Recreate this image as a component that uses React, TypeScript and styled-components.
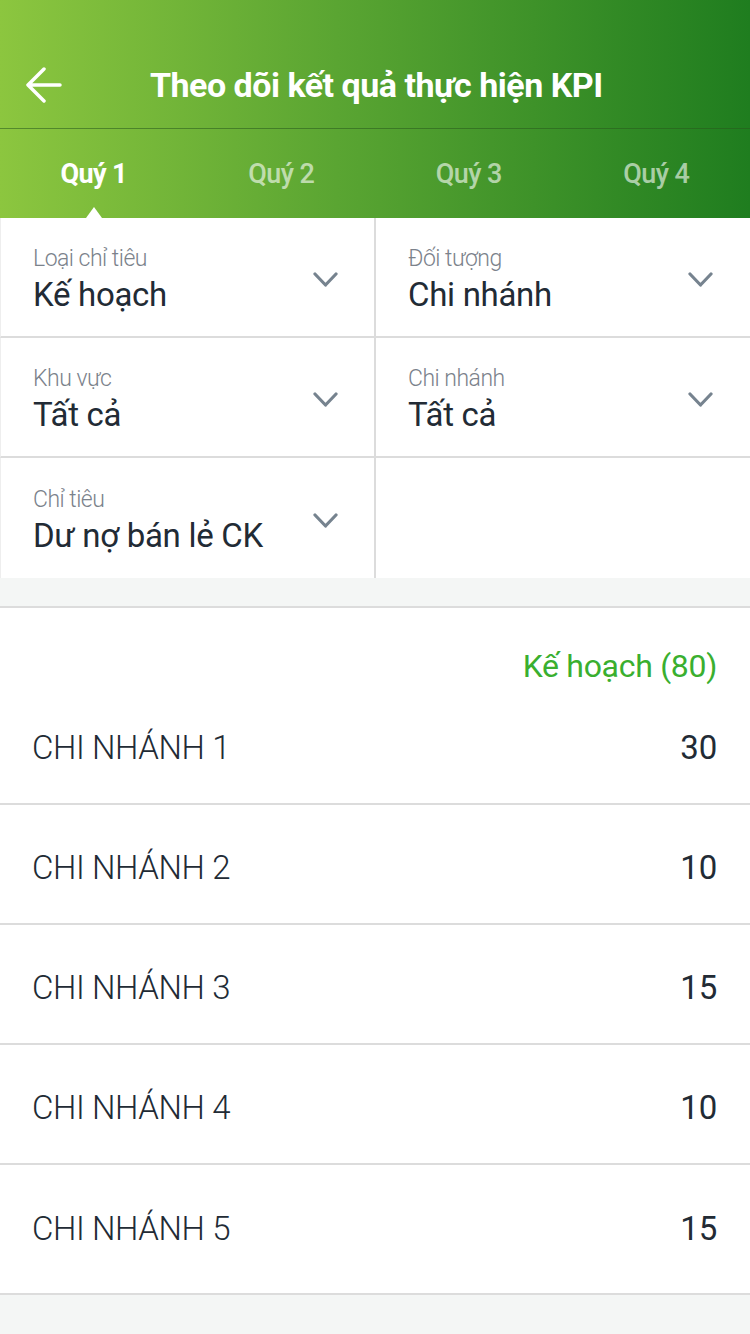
import React from "react";
import styled, { createGlobalStyle } from "styled-components";

const Global = createGlobalStyle`
  html, body { margin: 0; padding: 0; background: #f4f6f5; }
  body { font-family: "Roboto", "Liberation Sans", sans-serif; -webkit-font-smoothing: antialiased; }
  * { box-sizing: border-box; }
`;

const Page = styled.div`
  width: 750px;
  min-height: 1334px;
  background: #f4f6f5;
  display: flex;
  flex-direction: column;
`;

const Header = styled.header`
  background: linear-gradient(90deg, #8cc63f 0%, #5aa532 45%, #1f7d1f 100%);
  display: flex;
  flex-direction: column;
`;

const TitleBar = styled.div`
  height: 129px;
  display: flex;
  align-items: center;
  border-bottom: 1px solid rgba(40, 90, 30, 0.55);
  padding: 42px 0 0 26px;
`;

const BackButton = styled.button`
  background: none;
  border: none;
  padding: 0;
  width: 36px;
  height: 36px;
  display: flex;
  align-items: center;
  justify-content: center;
  cursor: pointer;
`;

const Title = styled.h1`
  flex: 1;
  margin: 0 0 0 88px;
  color: #fff;
  font-size: 34px;
  font-weight: 700;
  letter-spacing: -0.5px;
`;

const Tabs = styled.nav`
  height: 89px;
  display: grid;
  grid-template-columns: repeat(4, 1fr);
`;

const Tab = styled.div<{ $active?: boolean }>`
  position: relative;
  display: flex;
  align-items: center;
  justify-content: center;
  font-size: 27px;
  letter-spacing: -0.6px;
  font-weight: ${(p) => (p.$active ? 700 : 500)};
  color: ${(p) => (p.$active ? "#ffffff" : "rgba(255,255,255,0.6)")};
  &::after {
    content: "";
    display: ${(p) => (p.$active ? "block" : "none")};
    position: absolute;
    bottom: 0;
    left: 50%;
    transform: translateX(-50%);
    border-left: 8px solid transparent;
    border-right: 8px solid transparent;
    border-bottom: 11px solid #fff;
  }
`;

const Filters = styled.section`
  display: grid;
  grid-template-columns: 375px 375px;
  background: #fff;
`;

const FilterCell = styled.div<{ $right?: boolean; $last?: boolean }>`
  height: 120px;
  display: flex;
  align-items: center;
  padding: 0 37px 0 32px;
  border-bottom: ${(p) => (p.$last ? "none" : "2px solid #dcdcdc")};
  border-left: ${(p) => (p.$right ? "2px solid #dcdcdc" : "1px solid #eeeeee")};
  margin-left: ${(p) => (p.$right ? "-1px" : "0")};
`;

const FilterText = styled.div`
  flex: 1;
  display: flex;
  flex-direction: column;
  padding-top: 6px;
`;

const FilterLabel = styled.span`
  font-size: 23px;
  color: #7b828b;
  letter-spacing: -0.5px;
  font-weight: 300;
  line-height: 26px;
`;

const FilterValue = styled.span`
  font-size: 33px;
  color: #222b35;
  letter-spacing: -0.3px;
  font-weight: 400;
  line-height: 38px;
  margin-top: 4px;
`;

const Chevron = styled.svg`
  width: 25px;
  height: 16px;
  margin-top: 6px;
`;

const Gap = styled.div`
  height: 30px;
  background: #f4f6f5;
  border-bottom: 2px solid #dcdcdc;
`;

const List = styled.section`
  background: #fff;
  border-bottom: 2px solid #dcdcdc;
  padding-bottom: 8px;
`;

const ListHead = styled.div`
  height: 77px;
  display: flex;
  align-items: flex-end;
  justify-content: flex-end;
  padding: 0 33px 0 32px;
  color: #3aaf2f;
  font-size: 32px;
  letter-spacing: -0.3px;
  font-weight: 400;
  line-height: 38px;
`;

const Row = styled.div<{ $last?: boolean }>`
  height: 120px;
  display: flex;
  align-items: center;
  justify-content: space-between;
  padding: 0 33px 0 32px;
  border-bottom: ${(p) => (p.$last ? "none" : "2px solid #dcdcdc")};
`;

const RowName = styled.span`
  font-size: 33px;
  color: #222b35;
  letter-spacing: -0.4px;
  font-weight: 300;
  margin-top: 7px;
`;

const RowValue = styled.span`
  font-size: 33px;
  color: #222b35;
  font-weight: 400;
  letter-spacing: -0.2px;
  margin-top: 7px;
`;

const ChevronIcon = () => (
  <Chevron viewBox="0 0 25 16">
    <path d="M2 2 L12.5 13 L23 2" fill="none" stroke="#76838f" strokeWidth="3.2" strokeLinecap="round" strokeLinejoin="round" />
  </Chevron>
);

const filters: { label: string; value: string }[] = [
  { label: "Loại chỉ tiêu", value: "Kế hoạch" },
  { label: "Đối tượng", value: "Chi nhánh" },
  { label: "Khu vực", value: "Tất cả" },
  { label: "Chi nhánh", value: "Tất cả" },
  { label: "Chỉ tiêu", value: "Dư nợ bán lẻ CK" },
];

const rows = [
  { name: "CHI NHÁNH 1", value: "30" },
  { name: "CHI NHÁNH 2", value: "10" },
  { name: "CHI NHÁNH 3", value: "15" },
  { name: "CHI NHÁNH 4", value: "10" },
  { name: "CHI NHÁNH 5", value: "15" },
];

export default function App() {
  return (
    <Page>
      <Global />
      <Header>
        <TitleBar>
          <BackButton aria-label="back">
            <svg width="36" height="36" viewBox="0 0 36 36">
              <path d="M34 18 H3 M18 2 L2 18 L18 34" fill="none" stroke="#fff" strokeWidth="3.5" strokeLinecap="round" strokeLinejoin="round" />
            </svg>
          </BackButton>
          <Title>Theo dõi kết quả thực hiện KPI</Title>
        </TitleBar>
        <Tabs>
          {["Quý 1", "Quý 2", "Quý 3", "Quý 4"].map((t, i) => (
            <Tab key={t} $active={i === 0}>
              {t}
            </Tab>
          ))}
        </Tabs>
      </Header>
      <Filters>
        {filters.map((f, i) => (
          <FilterCell key={f.label} $right={i % 2 === 1} $last={i >= 4}>
            <FilterText>
              <FilterLabel>{f.label}</FilterLabel>
              <FilterValue>{f.value}</FilterValue>
            </FilterText>
            <ChevronIcon />
          </FilterCell>
        ))}
        <FilterCell $right $last />
      </Filters>
      <Gap />
      <List>
        <ListHead>Kế hoạch (80)</ListHead>
        {rows.map((r, i) => (
          <Row key={r.name} $last={i === rows.length - 1}>
            <RowName>{r.name}</RowName>
            <RowValue>{r.value}</RowValue>
          </Row>
        ))}
      </List>
    </Page>
  );
}
